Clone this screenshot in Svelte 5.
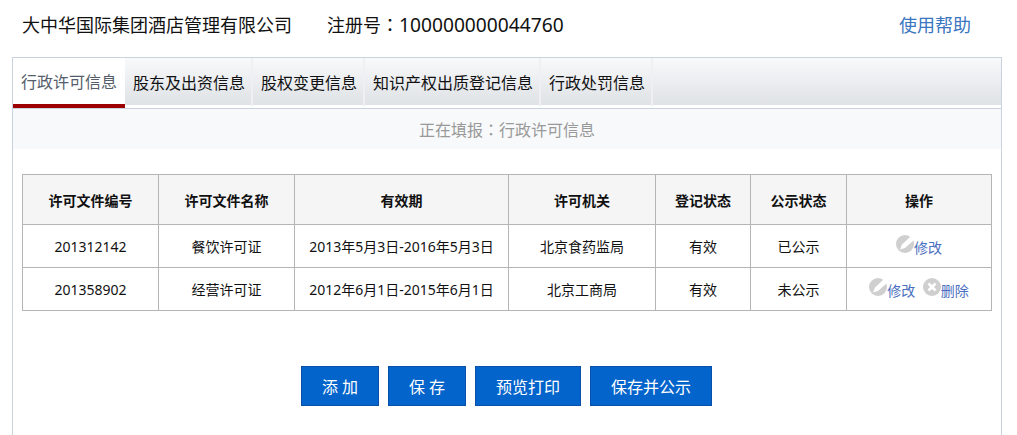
<script>
	const tabs = ['行政许可信息', '股东及出资信息', '股权变更信息', '知识产权出质登记信息', '行政处罚信息'];
	const rows = [
		{ no: '201312142', name: '餐饮许可证', period: '2013年5月3日-2016年5月3日', org: '北京食药监局', state: '有效', pub: '已公示', del: false },
		{ no: '201358902', name: '经营许可证', period: '2012年6月1日-2015年6月1日', org: '北京工商局', state: '有效', pub: '未公示', del: true }
	];
</script>

<header class="top">
	<span class="company">大中华国际集团酒店管理有限公司</span>
	<span class="reg">注册号<span class="colon">：</span><span class="num">100000000044760</span></span>
	<a class="help" href="#help">使用帮助</a>
</header>

<section class="panel">
	<nav class="tabs">
		{#each tabs as tab, i}
			<span class="tab" class:active={i === 0}>{tab}</span>
		{/each}
	</nav>
	<div class="status">正在填报<span class="colon">：</span>行政许可信息</div>

	<table>
		<colgroup>
			<col style="width:136px" /><col style="width:136px" /><col style="width:214px" /><col style="width:147px" /><col style="width:95px" /><col style="width:96px" /><col />
		</colgroup>
		<thead>
			<tr><th>许可文件编号</th><th>许可文件名称</th><th>有效期</th><th>许可机关</th><th>登记状态</th><th>公示状态</th><th>操作</th></tr>
		</thead>
		<tbody>
			{#each rows as r}
				<tr>
					<td>{r.no}</td>
					<td>{r.name}</td>
					<td>{r.period}</td>
					<td>{r.org}</td>
					<td>{r.state}</td>
					<td>{r.pub}</td>
					<td class="ops">
						<a href="#edit"><svg viewBox="0 0 18 18" width="18" height="18"><circle cx="9" cy="9" r="9" fill="#cfcfcf" /><path d="M14.5 1.5 18 5 9 13 4 14.5 6 9.5z" fill="#fff" /></svg>修改</a>
						{#if r.del}
							<a href="#del"><svg viewBox="0 0 18 18" width="18" height="18"><circle cx="9" cy="9" r="9" fill="#cfcfcf" /><path d="M5.5 5.5l7 7m0-7l-7 7" stroke="#fff" stroke-width="2.6" /></svg>删除</a>
						{/if}
					</td>
				</tr>
			{/each}
		</tbody>
	</table>

	<div class="actions">
		<button>添 加</button>
		<button>保 存</button>
		<button class="wide">预览打印</button>
		<button class="wider">保存并公示</button>
	</div>
</section>

<style>
	:global(body) {
		margin: 0;
		background: #fff;
		font-family: "Noto Sans", "Noto Sans CJK SC", sans-serif;
		color: #222;
		overflow: hidden;
	}
	.top {
		display: flex;
		align-items: center;
		height: 57px;
		padding: 0 46px 8px 22px;
		box-sizing: border-box;
		font-size: 18px;
		line-height: 26px;
		color: #111;
	}
	.company { margin-right: 35px; }
	.colon { font-family: "Noto Sans CJK TC", sans-serif; }
	.num { font-size: 19.2px; }
	.help { margin-left: auto; color: #3a75c0; text-decoration: none; }
	.panel {
		width: 990px;
		margin-left: 12px;
		box-sizing: border-box;
		height: 378px;
		border: 1px solid #c9d3e0;
		border-bottom: 0;
	}
	.tabs {
		display: flex;
		height: 47px;
		background: linear-gradient(#f8f9fa, #dfe2e6);
		margin-bottom: 4px;
		position: relative;
	}
	.tabs::after {
		content: '';
		position: absolute;
		left: 0;
		right: 0;
		top: 50px;
		height: 1px;
		background: #c9d3e0;
	}
	.tab {
		display: flex;
		align-items: center;
		justify-content: center;
		padding: 0 6px 0 8px;
		font-size: 16px;
		color: #111;
		height: 48px;
		box-sizing: border-box;
		border-right: 2px solid #eef0f2;
	}
	.tab.active {
		width: 112px;
		padding: 0;
		height: 50px;
		background: #fff;
		color: #555e6b;
		border-right: 0;
		border-bottom: 4px solid #9c0000;
		position: relative;
		z-index: 1;
	}
	.status {
		height: 40px;
		background: #f8f9fb;
		color: #999;
		font-size: 16px;
		line-height: 40px;
		text-align: center;
	}
	table {
		width: 970px;
		margin: 25px 0 0 9px;
		border-collapse: collapse;
		table-layout: fixed;
		font-size: 14px;
		color: #111;
	}
	th, td {
		border: 1px solid #b5b5b5;
		text-align: center;
		padding: 0;
	}
	th {
		height: 49px;
		background: #f5f5f5;
		color: #111;
	}
	td { height: 42px; }
	.ops a {
		color: #4a6fc0;
		text-decoration: none;
		margin: 0 2px;
	}
	.ops svg { vertical-align: 0; }
	.actions {
		display: flex;
		justify-content: center;
		gap: 9px;
		margin-top: 55px;
		padding-right: 1px;
	}
	button {
		width: 78px;
		height: 40px;
		background: #0364cb;
		border: 1px solid #0a4fa8;
		color: #fff;
		font-family: inherit;
		font-size: 16px;
		padding: 0;
	}
	.wide { width: 106px; }
	.wider { width: 122px; }
</style>
